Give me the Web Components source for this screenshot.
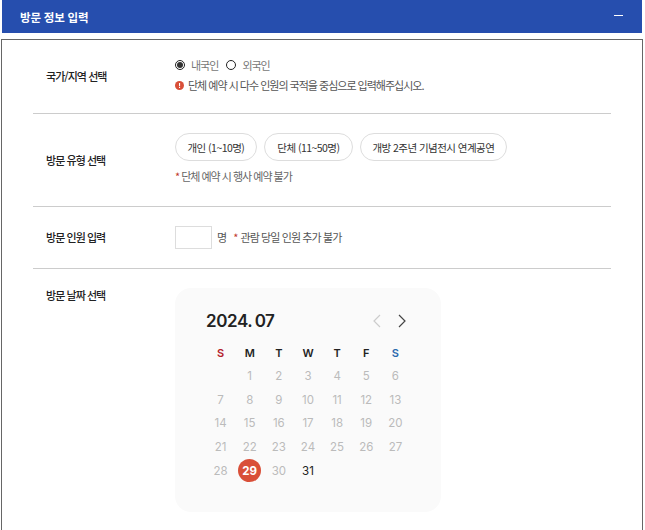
<!DOCTYPE html>
<html lang="ko">
<head>
<meta charset="utf-8">
<title>방문 정보 입력</title>
<style>
  html, body { margin: 0; padding: 0; background: #fff; overflow: hidden; }
  body { font-family: "Noto Sans CJK KR", "Noto Sans", sans-serif; color: #333; }
</style>
</head>
<body>
<visit-panel title="방문 정보 입력">
  <form-row label="국가/지역 선택" pad="15px 0 19px" style="--row-h:73px;--label-shift:2px">
    <div style="display:flex;gap:8px;height:19px;align-items:center">
      <radio-option checked>내국인</radio-option>
      <radio-option>외국인</radio-option>
    </div>
    <notice-line icon style="margin-top:2px">단체 예약 시 다수 인원의 국적을 중심으로 입력해주십시오.</notice-line>
  </form-row>
  <form-row label="방문 유형 선택" style="--row-h:93px">
    <div style="display:flex;gap:7px;padding-top:19px">
      <pill-button>개인 (1~10명)</pill-button>
      <pill-button style="padding:0 12.5px">단체 (11~50명)</pill-button>
      <pill-button>개방 2주년 기념전시 연계공연</pill-button>
    </div>
    <notice-line star style="margin-top:6px">단체 예약 시 행사 예약 불가</notice-line>
  </form-row>
  <form-row label="방문 인원 입력" style="--row-h:62px;--label-shift:2px">
    <count-field></count-field>
  </form-row>
  <form-row label="방문 날짜 선택" top last>
    <visit-calendar month="2024. 07" selected="29" active="31"></visit-calendar>
  </form-row>
</visit-panel>

<script>
const FONT_KR = '"Noto Sans CJK KR", "Noto Sans", sans-serif';

class VisitPanel extends HTMLElement {
  constructor() {
    super();
    this.attachShadow({ mode: 'open' });
    this.shadowRoot.innerHTML = `
      <style>
        :host { display: block; width: 645px; }
        .head {
          display: flex; align-items: center; justify-content: space-between;
          height: 33px; margin: 0 3px 0 2px; padding: 0 19px 0 18px; box-sizing: border-box;
          background: #264eae; color: #fff;
          font: 700 11.5px ${FONT_KR}; letter-spacing: -0.2px;
        }
        .minus { width: 9px; height: 1px; background: #fff; margin-bottom: 2px; }
        .body {
          margin: 6px 2px 0 1px; padding: 0 31px; height: 600px;
          border: 1px solid #666; box-sizing: border-box;
        }
      </style>
      <div class="head"><span class="title"></span><span class="minus"></span></div>
      <div class="body"><slot></slot></div>`;
    this.shadowRoot.querySelector('.title').textContent = this.getAttribute('title');
  }
}

class FormRow extends HTMLElement {
  constructor() {
    super();
    this.attachShadow({ mode: 'open' });
    this.shadowRoot.innerHTML = `
      <style>
        :host {
          display: grid; grid-template-columns: 129px 1fr; box-sizing: border-box;
          min-height: var(--row-h, 0); padding-left: 13px;
          border-bottom: 1px solid #ccc;
        }
        :host([last]) { border-bottom: 0; padding-top: 19px; }
        :host([top]) .label { align-self: start; line-height: 16px; margin-top: -1px; }
        .label {
          align-self: center; color: #222; padding-bottom: var(--label-shift, 0);
          font: 500 11px ${FONT_KR}; letter-spacing: -0.95px;
        }
        .content { display: block; }
      </style>
      <div class="label"></div>
      <div class="content"><slot></slot></div>`;
    this.shadowRoot.querySelector('.label').textContent = this.getAttribute('label');
    if (this.getAttribute('pad')) this.shadowRoot.querySelector('.content').style.padding = this.getAttribute('pad');
  }
}

class RadioOption extends HTMLElement {
  constructor() {
    super();
    this.attachShadow({ mode: 'open' });
    this.shadowRoot.innerHTML = `
      <style>
        :host {
          display: inline-flex; align-items: center; gap: 6px; color: #777;
          font: 400 11px ${FONT_KR}; letter-spacing: -1px;
        }
        .dot {
          width: 8px; height: 8px; border: 1px solid #222; border-radius: 50%;
          display: flex; align-items: center; justify-content: center; background: #fff;
        }
        :host([checked]) .dot::after {
          content: ""; width: 6px; height: 6px; border-radius: 50%; background: #333;
        }
      </style>
      <span class="dot"></span><slot></slot>`;
  }
}

class NoticeLine extends HTMLElement {
  constructor() {
    super();
    this.attachShadow({ mode: 'open' });
    const mark = this.hasAttribute('icon')
      ? `<svg width="9" height="9" viewBox="0 0 9 9"><circle cx="4.5" cy="4.5" r="4.5" fill="#d94f38"/><rect x="4" y="2" width="1.1" height="3.2" fill="#fff"/><rect x="4" y="5.9" width="1.1" height="1.1" fill="#fff"/></svg>`
      : `<span class="star">*</span>`;
    this.shadowRoot.innerHTML = `
      <style>
        :host {
          display: flex; align-items: center; gap: 4px; height: 18px; color: #555;
          font: 400 11px ${FONT_KR}; letter-spacing: -1px; white-space: nowrap;
        }
        :host([star]) { gap: 2px; color: #666; }
        .star { color: #c0392b; }
      </style>
      ${mark}<span><slot></slot></span>`;
  }
}

class PillButton extends HTMLElement {
  constructor() {
    super();
    this.attachShadow({ mode: 'open' });
    this.shadowRoot.innerHTML = `
      <style>
        :host {
          display: inline-flex; align-items: center; height: 28px; padding: 0 11.5px;
          box-sizing: border-box; border: 1px solid #ddd; border-radius: 14px; background: #fff;
          color: #333; font: 400 10.5px ${FONT_KR}; letter-spacing: -0.55px; white-space: nowrap;
        }
      </style>
      <slot></slot>`;
  }
}

class CountField extends HTMLElement {
  constructor() {
    super();
    this.attachShadow({ mode: 'open' });
    this.shadowRoot.innerHTML = `
      <style>
        :host {
          display: flex; align-items: center; height: 100%; color: #555;
          font: 400 11px ${FONT_KR}; letter-spacing: -0.9px;
        }
        input {
          width: 37px; height: 23px; box-sizing: border-box; margin: 0 5px 0 0; padding: 0;
          border: 1px solid #ddd; background: #fff; outline: none;
        }
        span { padding-bottom: 2px; }
        .note { margin-left: 7px; }
        .star { color: #c0392b; margin-right: 3px; padding: 0; }
      </style>
      <input type="text" aria-label="방문 인원"><span>명</span>
      <span class="note"><span class="star">*</span>관람 당일 인원 추가 불가</span>`;
  }
}

class VisitCalendar extends HTMLElement {
  constructor() {
    super();
    this.attachShadow({ mode: 'open' });
    const selected = +this.getAttribute('selected');
    const active = +this.getAttribute('active');
    const heads = ['S', 'M', 'T', 'W', 'T', 'F', 'S']
      .map((d, i) => `<div class="wd ${i === 0 ? 'sun' : i === 6 ? 'sat' : ''}">${d}</div>`).join('');
    let cells = '<div></div>';
    for (let d = 1; d <= 31; d++) {
      const cls = d === selected ? 'sel' : d === active ? 'on' : '';
      cells += `<div class="day ${cls}"><span>${d}</span></div>`;
    }
    this.shadowRoot.innerHTML = `
      <style>
        :host {
          display: block; width: 266px; height: 224px; box-sizing: border-box;
          padding: 20px 29px 0 31px; background: #fafafa; border-radius: 16px;
          font-family: Inter, "Liberation Sans", sans-serif;
        }
        .top { display: flex; align-items: center; justify-content: space-between; height: 25px; margin-bottom: 10px; }
        .month { font-size: 17px; font-weight: 600; color: #222; letter-spacing: -0.4px; word-spacing: -1.2px; }
        .nav { display: flex; gap: 15px; margin-right: 5px; }
        svg { display: block; }
        .grid {
          display: grid; grid-template-columns: repeat(7, 29.15px);
          grid-template-rows: 21px; grid-auto-rows: 23.75px;
        }
        .wd { text-align: center; font-size: 11px; font-weight: 600; color: #222; line-height: 20px; height: 20px; }
        .sun { color: #b3202a; }
        .sat { color: #2b69ae; }
        .day { display: flex; align-items: center; justify-content: center; font-size: 11.5px; color: #bbb; }
        .day span { width: 23px; height: 23px; display: flex; align-items: center; justify-content: center; border-radius: 50%; }
        .on { color: #222; }
        .sel span { background: #d94f38; color: #fff; font-weight: 700; }
      </style>
      <div class="top">
        <span class="month">${this.getAttribute('month')}</span>
        <div class="nav">
          <svg width="10" height="14" viewBox="0 0 10 14" fill="none" stroke="#ccc" stroke-width="1.2"><path d="M8 1 2 7l6 6"/></svg>
          <svg width="10" height="14" viewBox="0 0 10 14" fill="none" stroke="#444" stroke-width="1.2"><path d="M2 1l6 6-6 6"/></svg>
        </div>
      </div>
      <div class="grid">${heads}${cells}</div>`;
  }
}

customElements.define('visit-panel', VisitPanel);
customElements.define('form-row', FormRow);
customElements.define('radio-option', RadioOption);
customElements.define('notice-line', NoticeLine);
customElements.define('pill-button', PillButton);
customElements.define('count-field', CountField);
customElements.define('visit-calendar', VisitCalendar);
</script>
</body>
</html>
